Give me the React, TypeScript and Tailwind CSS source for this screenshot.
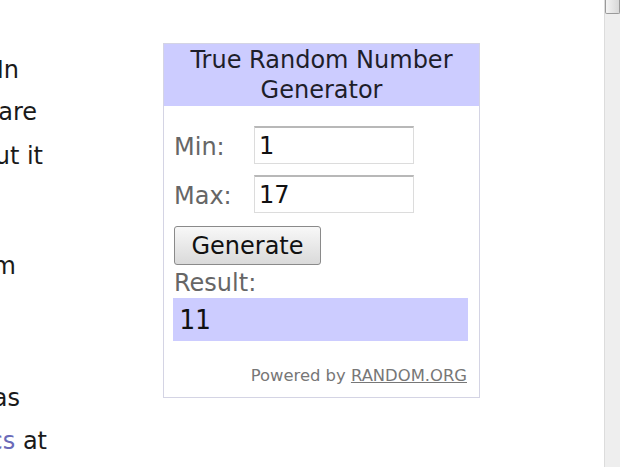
const lines: { text: React.ReactNode; end: number; mt: number }[] = [
  { text: "In", end: 19, mt: 55 },
  { text: "are", end: 37, mt: 12 },
  { text: "but it", end: 43, mt: 14 },
  { text: "from", end: 16, mt: 80 },
  { text: "was", end: 20, mt: 102 },
  {
    text: (
      <>
        <span className="text-[#6a6ab8]">statistics</span> at
      </>
    ),
    end: 47,
    mt: 13,
  },
];

function SideText() {
  return (
    <div className="w-[163px] shrink-0 overflow-hidden font-['DejaVu_Sans',sans-serif] text-[24px] leading-[30px] text-[#1a1a1a]">
      {lines.map((l, i) => (
        <div key={i} className="flex justify-end" style={{ width: l.end, marginTop: l.mt }}>
          <span className="shrink-0 whitespace-nowrap">{l.text}</span>
        </div>
      ))}
    </div>
  );
}

function Field({ label, value }: { label: string; value: string }) {
  return (
    <div className="flex items-center">
      <span className="w-[80px] pt-[3px] text-[#666]">{label}</span>
      <div className="flex h-[38px] w-[160px] items-center border border-[#dcdcdc] border-t-[#b8b8b8] border-t-2 bg-white px-[4px] text-[#111]">
        {value}
      </div>
    </div>
  );
}

function Generator() {
  return (
    <div className="mt-[43px] flex h-[355px] w-[317px] flex-col border border-[#d4d4e4] bg-white font-['DejaVu_Sans',sans-serif] text-[24px] leading-[30px]">
      <div className="bg-[#ccccff] py-[1px] text-center text-[#1e1e2a]">
        True Random Number
        <br />
        Generator
      </div>
      <div className="flex flex-col px-[10px]">
        <div className="mt-[20px] flex flex-col gap-[11px]">
          <Field label="Min:" value="1" />
          <Field label="Max:" value="17" />
        </div>
        <button className="mt-[13px] h-[39px] w-[147px] rounded-[3px] border border-[#8a8a8a] bg-linear-to-b from-[#f8f8f8] to-[#dadada] text-[#111]">
          Generate
        </button>
        <div className="mt-[3px] text-[#666]">Result:</div>
        <div className="-ml-px flex h-[43px] w-[295px] items-center bg-[#ccccff] px-[6px] font-['DejaVu_Sans_Mono',monospace] text-[26px] text-[#111]">
          11
        </div>
        <div className="mt-[25px] pr-[2px] text-right text-[16.4px] leading-[20px] text-[#777]">
          Powered by <span className="underline">RANDOM.ORG</span>
        </div>
      </div>
    </div>
  );
}

function Scrollbar() {
  return (
    <div className="flex w-[16px] shrink-0 flex-col border-l border-[#dcdcdc] bg-[#eeeeee]">
      <div className="h-[14px] rounded-b-[2px] border border-t-0 border-[#9a9a9a] bg-linear-to-r from-[#f4f4f4] to-[#d8d8d8]" />
    </div>
  );
}

export default function App() {
  return (
    <div className="flex h-[467px] w-[620px] overflow-hidden bg-white">
      <SideText />
      <div className="flex-1">
        <Generator />
      </div>
      <Scrollbar />
    </div>
  );
}
